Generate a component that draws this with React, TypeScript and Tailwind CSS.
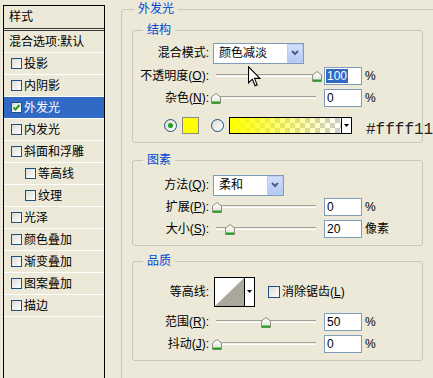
import React from "react";

type Item = { label: string; indent?: boolean; selected?: boolean };

const items: Item[] = [
  { label: "投影" },
  { label: "内阴影" },
  { label: "外发光", selected: true },
  { label: "内发光" },
  { label: "斜面和浮雕" },
  { label: "等高线", indent: true },
  { label: "纹理", indent: true },
  { label: "光泽" },
  { label: "颜色叠加" },
  { label: "渐变叠加" },
  { label: "图案叠加" },
  { label: "描边" },
];

function CheckBox({ checked, size = 11 }: { checked?: boolean; size?: number }) {
  return (
    <div
      className={
        (size === 11 ? "w-[11px] h-[11px] " : "w-[12px] h-[12px] ") +
        "shrink-0 border border-[#1c5180] bg-gradient-to-br from-[#dcdcd5] to-white flex items-center justify-center"
      }
    >
      {checked && (
        <svg width="7" height="7" viewBox="0 0 7 7">
          <path d="M0.5 3.5 L2.5 5.5 L6.5 1" stroke="#21a121" strokeWidth="2" fill="none" />
        </svg>
      )}
    </div>
  );
}

function Thumb({ left }: { left: number }) {
  return (
    <svg
      className="absolute top-[6px]"
      style={{ left }}
      width="10"
      height="11"
      viewBox="0 0 10 11"
    >
      <defs>
        <linearGradient id="tg" x1="0" y1="0" x2="0" y2="1">
          <stop offset="0" stopColor="#ffffff" />
          <stop offset="1" stopColor="#e3e2da" />
        </linearGradient>
      </defs>
      <path d="M0.5 10.5 V4 L5 0.5 L9.5 4 V10.5 Z" fill="url(#tg)" stroke="#8e8d80" />
      <path d="M1 9.5 H9" stroke="#21a121" strokeWidth="2" />
    </svg>
  );
}

function Slider({ center }: { center: number }) {
  return (
    <div className="relative w-[109px] h-[22px] shrink-0">
      <div className="absolute left-[3px] top-[9px] w-[100px] h-[3px] border-t border-[#a3a193] bg-[#f0efe8] border-b border-b-white" />
      <Thumb left={center - 213 - 5} />
    </div>
  );
}

function Input({ children }: { children: React.ReactNode }) {
  return (
    <div className="ml-[2px] w-[38px] h-[18px] shrink-0 border border-[#7f9db9] bg-white pl-[1px] flex items-center text-[12px] leading-[14px]">
      {children}
    </div>
  );
}

function Chevron() {
  return (
    <svg width="8" height="6" viewBox="0 0 8 6">
      <path d="M1 1 L4 4 L7 1" stroke="#4d6185" strokeWidth="2" fill="none" />
    </svg>
  );
}

function ComboButton() {
  return (
    <div className="w-[16px] h-full shrink-0 bg-gradient-to-b from-[#d3e0fd] to-[#b3c8f6] border border-[#bccdf6] flex items-center justify-center">
      <Chevron />
    </div>
  );
}

function Label({ children }: { children: React.ReactNode }) {
  return (
    <div className="w-[67px] shrink-0 flex justify-end whitespace-nowrap text-[12px] leading-[14px] pr-[1px]">
      <span>{children}</span>
    </div>
  );
}

function SliderRow({
  label,
  center,
  value,
  unit,
  extra = "",
}: {
  label: React.ReactNode;
  center: number;
  value: React.ReactNode;
  unit: string;
  extra?: string;
}) {
  return (
    <div className={"flex items-center h-[22px] " + extra}>
      <Label>{label}</Label>
      <div className="ml-[3px] flex items-center shrink-0">
        <Slider center={center} />
        <Input>{value}</Input>
        <span className="ml-[3px] text-[12px] leading-[14px] whitespace-nowrap">{unit}</span>
      </div>
    </div>
  );
}

function Radio({ checked }: { checked?: boolean }) {
  return (
    <div className="w-[13px] h-[13px] shrink-0 rounded-full border border-[#1c5180] bg-gradient-to-br from-[#dcdcd5] to-white flex items-center justify-center">
      {checked && <div className="w-[5px] h-[5px] rounded-full bg-[#21a121]" />}
    </div>
  );
}

export default function App() {
  return (
    <div className="relative w-[433px] h-[378px] overflow-hidden bg-[#ece9d8] flex font-['Liberation_Sans','Noto_Sans_CJK_SC',sans-serif] text-black">
      {/* Left list */}
      <div className="ml-[3px] mt-[5px] w-[102px] shrink-0 border-l border-r border-t border-black flex flex-col text-[12px] leading-[14px]">
        <div className="h-[22px] flex items-center pl-[5px]">样式</div>
        <div className="h-[3px] border-t border-b border-[#3a3a3a]" />
        <div className="h-[22px] border-b border-white flex items-center pl-[5px]">混合选项:默认</div>
        {items.map((it) => (
          <div
            key={it.label}
            className={
              "h-[22px] border-b border-white flex items-center gap-[2px] " +
              (it.indent ? "pl-[21px] " : "pl-[7px] ") +
              (it.selected ? "bg-[#316ac5] text-white" : "")
            }
          >
            <CheckBox checked={it.selected} />
            <span>{it.label}</span>
          </div>
        ))}
      </div>

      {/* Right panel */}
      <fieldset className="ml-[16px] w-[320px] shrink-0 border border-[#cac7b7] rounded-[3px] px-[10px] min-w-0 self-start h-[400px]">
        <legend className="ml-[2px] px-[4px] text-[12px] leading-[18px] text-[#0046d5]">外发光</legend>

        {/* 结构 */}
        <fieldset className="mt-[3px] w-[291px] border border-[#cac7b7] rounded-[3px] pl-[10px] pt-[3px] pb-[7px] min-w-0">
          <legend className="px-[4px] text-[12px] leading-[18px] text-[#0046d5]">结构</legend>
          <div className="flex items-center h-[22px]">
            <Label>混合模式:</Label>
            <div className="ml-[3px] w-[91px] h-[21px] shrink-0 border border-[#7f9db9] bg-white flex items-center">
              <span className="flex-1 pl-[5px] text-[12px] leading-[14px]">颜色减淡</span>
              <ComboButton />
            </div>
          </div>
          <SliderRow
            extra="mt-[1px]"
            label={<>不透明度(<u>O</u>):</>}
            center={317}
            value={<span className="bg-[#316ac5] text-white px-[1px]">100</span>}
            unit="%"
          />
          <SliderRow label={<>杂色(<u>N</u>):</>} center={216} value={<span className="pl-[1px]">0</span>} unit="%" />
          <div className="mt-[6px] h-[20px] flex items-center">
            <div className="ml-[21px] shrink-0">
              <Radio checked />
            </div>
            <div className="ml-[5px] w-[17px] h-[17px] shrink-0 border border-[#8d8b7e] bg-[#ffff00]" />
            <div className="ml-[12px] shrink-0">
              <Radio />
            </div>
            <div className="ml-[5px] w-[123px] h-[17px] shrink-0 border border-black flex">
              <div className="flex-1 bg-[linear-gradient(to_right,#ffff00,rgba(255,255,0,0)),repeating-conic-gradient(#cccccc_0_25%,#ffffff_0_50%)] bg-[length:100%_100%,10px_10px]" />
              <div className="w-[10px] shrink-0 border-l border-black bg-white flex items-center justify-center">
                <svg width="5" height="3" viewBox="0 0 5 3">
                  <path d="M0 0 H5 L2.5 3 Z" fill="#000" />
                </svg>
              </div>
            </div>
            <span className="ml-[14px] mt-[10px] shrink-0 whitespace-nowrap font-['Liberation_Mono',monospace] text-[16px] leading-[18px] text-[#222]">
              #ffff11
            </span>
          </div>
        </fieldset>

        {/* 图素 */}
        <fieldset className="mt-[8px] w-[291px] border border-[#cac7b7] rounded-[3px] pl-[10px] pt-[5px] pb-[5px] min-w-0">
          <legend className="px-[4px] text-[12px] leading-[18px] text-[#0046d5]">图素</legend>
          <div className="flex items-center h-[22px]">
            <Label>方法(<u>Q</u>):</Label>
            <div className="ml-[3px] w-[71px] h-[21px] shrink-0 border border-[#7f9db9] bg-white flex items-center">
              <span className="flex-1 pl-[5px] text-[12px] leading-[14px]">柔和</span>
              <ComboButton />
            </div>
          </div>
          <SliderRow label={<>扩展(<u>P</u>):</>} center={217} value={<span className="pl-[1px]">0</span>} unit="%" />
          <SliderRow label={<>大小(<u>S</u>):</>} center={230} value={<span className="pl-[1px]">20</span>} unit="像素" />
        </fieldset>

        {/* 品质 */}
        <fieldset className="mt-[6px] w-[291px] border border-[#cac7b7] rounded-[3px] pl-[10px] pt-[6px] pb-[5px] min-w-0">
          <legend className="px-[4px] text-[12px] leading-[18px] text-[#0046d5]">品质</legend>
          <div className="flex items-center h-[31px]">
            <Label>等高线:</Label>
            <div className="ml-[4px] h-[30px] shrink-0 border border-black flex">
              <div className="w-[29px] h-full bg-white">
                <svg width="29" height="28" viewBox="0 0 29 28">
                  <path d="M0 28 L29 0 L29 28 Z" fill="#aaa89a" />
                </svg>
              </div>
              <div className="w-[10px] border-l border-black bg-white flex items-center justify-center">
                <svg width="5" height="3" viewBox="0 0 5 3">
                  <path d="M0 0 H5 L2.5 3 Z" fill="#000" />
                </svg>
              </div>
            </div>
            <div className="ml-[13px] shrink-0">
              <CheckBox size={12} />
            </div>
            <span className="ml-[2px] text-[12px] leading-[14px] whitespace-nowrap">
              消除锯齿(<u>L</u>)
            </span>
          </div>
          <SliderRow
            extra="mt-[4px]"
            label={<>范围(<u>R</u>):</>}
            center={266}
            value={<span className="pl-[1px]">50</span>}
            unit="%"
          />
          <SliderRow label={<>抖动(<u>J</u>):</>} center={217} value={<span className="pl-[1px]">0</span>} unit="%" />
        </fieldset>
      </fieldset>

      {/* mouse cursor */}
      <svg className="absolute left-[248px] top-[66px]" width="13" height="21" viewBox="0 0 12 19">
        <path
          d="M0.5 0.5 L0.5 15.5 L4 12 L6.5 18 L8.5 17.2 L6 11.2 L11 11.2 Z"
          fill="#fff"
          stroke="#000"
          strokeWidth="1"
          strokeLinejoin="miter"
        />
      </svg>
    </div>
  );
}
